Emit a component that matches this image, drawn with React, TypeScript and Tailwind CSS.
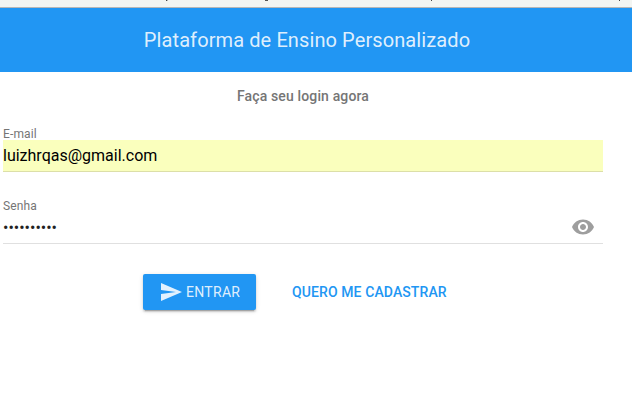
function SendIcon() {
  return (
    <svg viewBox="0 0 24 24" className="h-6 w-6 fill-current" aria-hidden="true">
      <path d="M2.01 21L23 12 2.01 3 2 10l15 2-15 2z" />
    </svg>
  );
}

function EyeIcon() {
  return (
    <svg viewBox="0 0 24 24" className="mb-[2px] h-6 w-6 fill-[#9e9e9e]" aria-hidden="true">
      <path d="M12 4.5C7 4.5 2.73 7.61 1 12c1.73 4.39 6 7.5 11 7.5s9.27-3.11 11-7.5c-1.73-4.39-6-7.5-11-7.5zM12 17c-2.76 0-5-2.24-5-5s2.24-5 5-5 5 2.24 5 5-2.24 5-5 5zm0-8c-1.66 0-3 1.34-3 3s1.34 3 3 3 3-1.34 3-3-1.34-3-3-3z" />
    </svg>
  );
}

export default function App() {
  return (
    <div className="flex h-[417px] w-[632px] flex-col overflow-hidden bg-white font-['Roboto',sans-serif]">
      {/* Bottom edge of the browser toolbar, with the descenders of its labels */}
      <div className="flex h-2 shrink-0 items-start border-b border-[#b6b6b6] bg-[#f3f5f2]">
        <span className="ml-[166px] h-px w-px bg-[#444444]" />
        <span className="h-px w-px bg-[#b8b8b8]" />
        <span className="ml-[97px] h-px w-[3px] bg-[#555555]" />
        <span className="ml-[163px] h-px w-px bg-[#444444]" />
        <span className="ml-[187px] h-px w-px bg-[#444444]" />
      </div>
      <header className="flex h-16 shrink-0 items-center justify-center bg-[#2196f3] pr-[18px]">
        <h1 className="text-xl font-normal tracking-[0.1px] text-white/87">Plataforma de Ensino Personalizado</h1>
      </header>
      <main className="w-[603px] pl-[3px]">
        <h2 className="pt-[14px] text-center text-sm font-medium leading-5 tracking-[0.14px] text-[#757575]">
          Faça seu login agora
        </h2>
        <div className="mt-[20px] flex flex-col">
          <label className="h-[14px] text-xs leading-4 tracking-[0.12px] text-[#757575]">E-mail</label>
          <div className="h-8 border-b border-[#dcdfa8] bg-[#faffbd] text-base leading-8 text-black">
            luizhrqas@gmail.com
          </div>
        </div>
        <div className="mt-[26px] flex flex-col">
          <label className="h-[14px] text-xs leading-4 tracking-[0.12px] text-[#757575]">Senha</label>
          <div className="flex h-8 items-center justify-between border-b border-[#e0e0e0] pr-2 text-base text-[#212121]">
            <span>••••••••••</span>
            <EyeIcon />
          </div>
        </div>
        <div className="mt-[30px] flex items-center pl-[140px] text-sm font-medium leading-9 tracking-[0.1px]">
          <button className="flex h-9 w-[113px] items-center rounded-xs bg-[#2196f3] pl-4 text-white/87 shadow-[0_2px_2px_0_rgba(0,0,0,0.14),0_1px_5px_0_rgba(0,0,0,0.12),0_3px_1px_-2px_rgba(0,0,0,0.2)]">
            <SendIcon />
            <span className="ml-[3px] font-normal tracking-[0.3px]">ENTRAR</span>
          </button>
          <button className="ml-9 text-[#2196f3]">QUERO ME CADASTRAR</button>
        </div>
      </main>
    </div>
  );
}
